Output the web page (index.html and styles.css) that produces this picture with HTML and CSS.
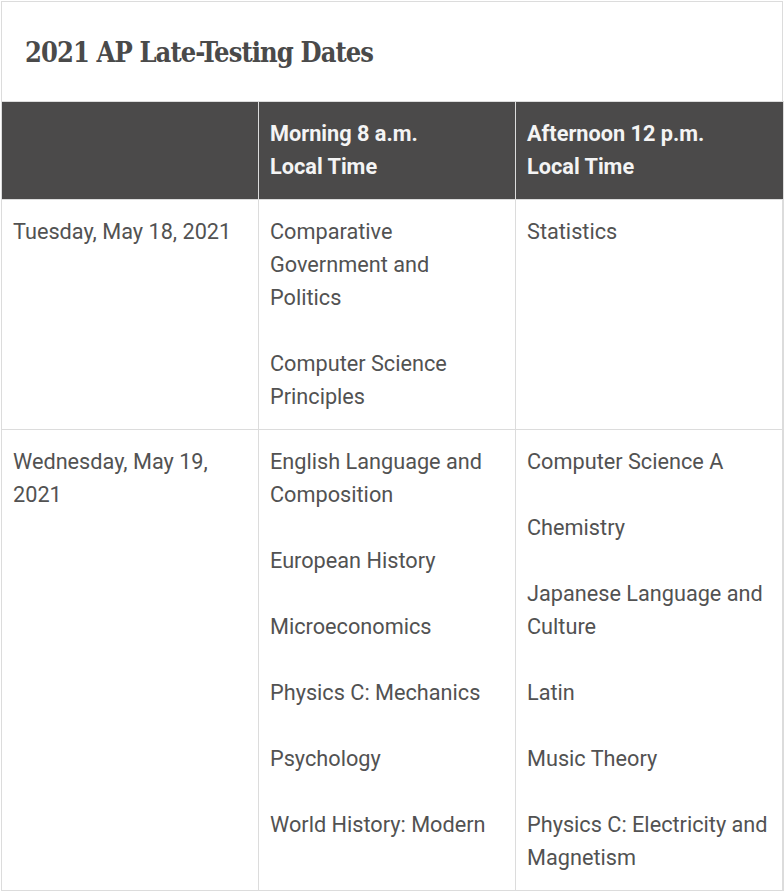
FILE: index.html
```html
<!DOCTYPE html>
<html>
<head>
<meta charset="utf-8">
<link rel="stylesheet" href="styles.css">
</head>
<body>
<div class="card">
  <h2 class="title">2021 AP Late-Testing Dates</h2>
  <table class="sched">
    <colgroup>
      <col class="c1"><col class="c2"><col class="c3">
    </colgroup>
    <thead>
      <tr>
        <th></th>
        <th>Morning 8 a.m.<br>Local Time</th>
        <th>Afternoon 12 p.m.<br>Local Time</th>
      </tr>
    </thead>
    <tbody>
      <tr>
        <td>Tuesday, May 18, 2021</td>
        <td>
          <p>Comparative Government and Politics</p>
          <p>Computer Science Principles</p>
        </td>
        <td>
          <p>Statistics</p>
        </td>
      </tr>
      <tr>
        <td>Wednesday, May 19, 2021</td>
        <td>
          <p>English Language and Composition</p>
          <p>European History</p>
          <p>Microeconomics</p>
          <p>Physics C: Mechanics</p>
          <p>Psychology</p>
          <p>World History: Modern</p>
        </td>
        <td>
          <p>Computer Science A</p>
          <p>Chemistry</p>
          <p>Japanese Language and Culture</p>
          <p>Latin</p>
          <p>Music Theory</p>
          <p>Physics C: Electricity and Magnetism</p>
        </td>
      </tr>
    </tbody>
  </table>
</div>
</body>
</html>
```
FILE: styles.css
```css
html, body {
  margin: 0;
  padding: 0;
  background: #ffffff;
}
body {
  padding: 1px 0 0 1px;
}
.card {
  width: 782px;
  box-sizing: border-box;
  border: 1px solid #dcdcdc;
  border-bottom: none;
  font-family: Roboto, "Noto Sans", sans-serif;
}
.title {
  margin: 0;
  height: 99px;
  box-sizing: border-box;
  padding: 33px 0 0 23px;
  font-family: "DejaVu Serif", serif;
  font-stretch: condensed;
  font-weight: bold;
  font-size: 27px;
  line-height: 36px;
  letter-spacing: -0.9px;
  color: #4a4a4a;
}
.sched {
  width: 782px;
  margin-left: -1px;
  border-collapse: collapse;
  table-layout: fixed;
}
.c1 { width: 257px; }
.c2 { width: 257px; }
.c3 { width: 268px; }
.sched th, .sched td {
  border: 1px solid #dcdcdc;
  padding: 15px 11px 16px 11px;
  vertical-align: top;
  text-align: left;
  font-size: 21.7px;
  line-height: 33px;
}
.sched th {
  background: #4b4a4a;
  color: #f4f4f4;
  font-weight: bold;
}
.sched td {
  color: #525252;
  font-weight: normal;
}
.sched p {
  margin: 0 0 33px 0;
}
.sched p:last-child {
  margin-bottom: 0;
}
```
